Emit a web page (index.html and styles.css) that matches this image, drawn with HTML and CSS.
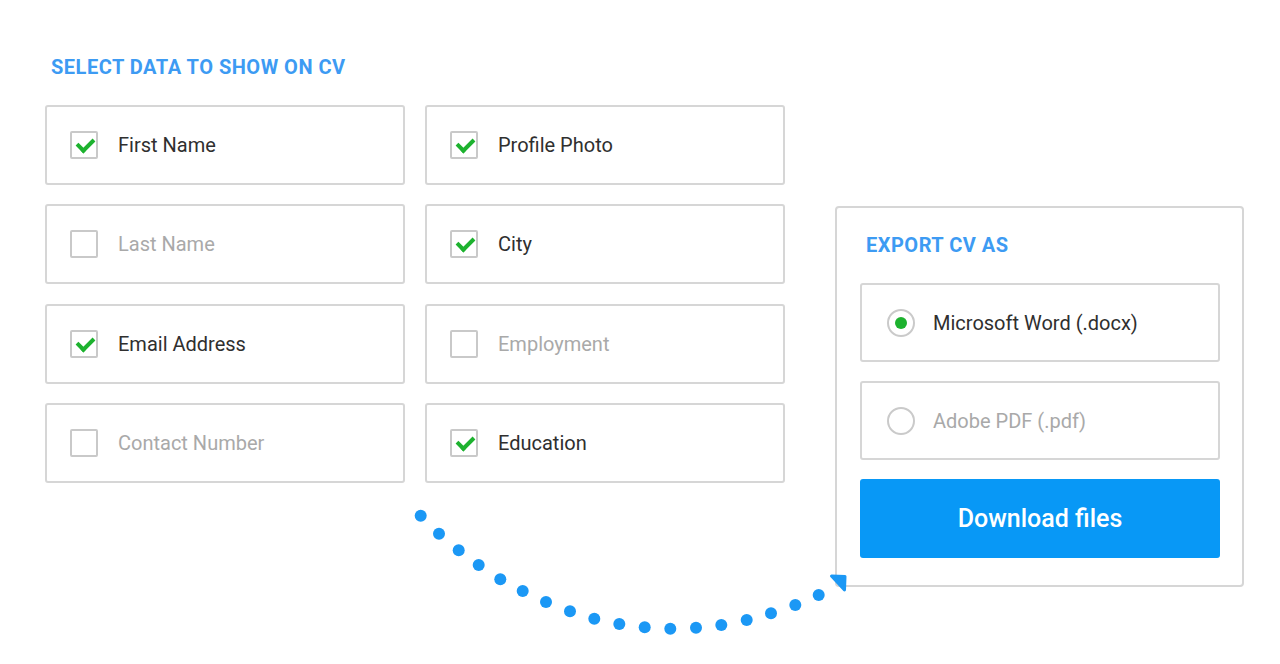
FILE: index.html
```html
<!DOCTYPE html>
<html lang="en">
<head>
    <meta charset="UTF-8">
    <meta name="viewport" content="width=device-width, initial-scale=1.0">
    <title>Export CV</title>
    <link rel="stylesheet" href="styles.css">
</head>
<body>
    <div class="page">
        <!-- data selection -->
        <section class="select-data">
            <h2 class="section-title">Select data to show on CV</h2>
            <div class="field-grid">
                <label class="field checked"><span class="checkbox"></span>First Name</label>
                <label class="field checked"><span class="checkbox"></span>Profile Photo</label>
                <label class="field"><span class="checkbox"></span>Last Name</label>
                <label class="field checked"><span class="checkbox"></span>City</label>
                <label class="field checked"><span class="checkbox"></span>Email Address</label>
                <label class="field"><span class="checkbox"></span>Employment</label>
                <label class="field"><span class="checkbox"></span>Contact Number</label>
                <label class="field checked"><span class="checkbox"></span>Education</label>
            </div>
        </section>

        <!-- export panel -->
        <section class="export-panel">
            <h2 class="section-title">Export CV as</h2>
            <label class="option selected"><span class="radio"></span>Microsoft Word (.docx)</label>
            <label class="option"><span class="radio"></span>Adobe PDF (.pdf)</label>
            <button class="download-btn">Download files</button>
        </section>

        <!-- dotted arrow -->
        <svg class="arrow" width="1280" height="664" viewBox="0 0 1280 664">
            <g fill="#1b98f5">
                <circle cx="420.7" cy="515.7" r="6"/>
                <circle cx="439" cy="533.7" r="6"/>
                <circle cx="458.7" cy="550.3" r="6"/>
                <circle cx="478.7" cy="565" r="6"/>
                <circle cx="500.3" cy="579.3" r="6"/>
                <circle cx="522.7" cy="591" r="6"/>
                <circle cx="546" cy="602" r="6"/>
                <circle cx="570" cy="611.3" r="6"/>
                <circle cx="594.3" cy="618.7" r="6"/>
                <circle cx="619.3" cy="624" r="6"/>
                <circle cx="644.7" cy="627.3" r="6"/>
                <circle cx="670.3" cy="628.7" r="6"/>
                <circle cx="696" cy="627.7" r="6"/>
                <circle cx="721.3" cy="625" r="6"/>
                <circle cx="746.7" cy="620" r="6"/>
                <circle cx="771" cy="613.3" r="6"/>
                <circle cx="795.3" cy="605" r="6"/>
                <circle cx="818.7" cy="595" r="6"/>
            </g>
            <polygon points="831.5,576 845,576.5 844.5,590" fill="#1b98f5" stroke="#1b98f5" stroke-width="3" stroke-linejoin="round"/>
        </svg>
    </div>
</body>
</html>
```

FILE: styles.css
```css
/* base */
* {
    box-sizing: border-box;
    margin: 0;
    padding: 0;
}

body {
    font-family: Roboto, "Liberation Sans", Arial, sans-serif;
    background: #fff;
    color: #333;
}

.page {
    position: relative;
    width: 1280px;
    height: 664px;
    display: flex;
    align-items: flex-start;
    gap: 50px;
    padding: 55px 0 0 45px;
}

/* headings */
.section-title {
    font-size: 20px;
    line-height: 24px;
    font-weight: 700;
    letter-spacing: 0.5px;
    text-transform: uppercase;
    color: #3d9bf3;
}

.select-data .section-title {
    padding-left: 6px;
    margin-bottom: 26px;
}

/* checkbox fields */
.field-grid {
    display: grid;
    grid-template-columns: 360px 360px;
    grid-auto-rows: 80px;
    gap: 19.4px 20px;
}

.field {
    display: flex;
    align-items: center;
    gap: 20px;
    padding-left: 23px;
    border: 2px solid #d6d6d6;
    border-radius: 3px;
    font-size: 20px;
    color: #a9a9a9;
}

.field.checked {
    color: #2f2f2f;
}

.checkbox {
    position: relative;
    width: 28px;
    height: 28px;
    border: 2px solid #c9c9c9;
    border-radius: 2px;
    flex-shrink: 0;
}

.field.checked .checkbox::after {
    content: "";
    position: absolute;
    left: 8px;
    top: 2px;
    width: 7px;
    height: 13px;
    border-right: 4px solid #1db22f;
    border-bottom: 4px solid #1db22f;
    transform: rotate(45deg);
}

/* export panel */
.export-panel {
    margin-top: 151px;
    width: 409px;
    display: flex;
    flex-direction: column;
    gap: 20px;
    padding: 25px 22px 27px 23px;
    border: 2px solid #d6d6d6;
    border-radius: 4px;
}

.export-panel .section-title {
    padding-left: 6px;
    margin-bottom: 6px;
}

.option {
    display: flex;
    align-items: center;
    gap: 18px;
    height: 79px;
    padding-left: 25px;
    border: 2px solid #d6d6d6;
    border-radius: 3px;
    font-size: 20px;
    color: #a9a9a9;
}

.option.selected {
    color: #2f2f2f;
}

.option + .option {
    margin-top: -1px;
}

.radio {
    position: relative;
    width: 28px;
    height: 28px;
    border: 2px solid #cacaca;
    border-radius: 50%;
    flex-shrink: 0;
}

.option.selected .radio::after {
    content: "";
    position: absolute;
    left: 6px;
    top: 6px;
    width: 12px;
    height: 12px;
    border-radius: 50%;
    background: #1db22f;
}

.download-btn {
    height: 79px;
    margin-top: -1px;
    border: none;
    border-radius: 3px;
    background: #0898f6;
    color: #fff;
    font-family: inherit;
    font-size: 25px;
    font-weight: 500;
    cursor: pointer;
}

/* arrow overlay */
.arrow {
    position: absolute;
    left: 0;
    top: 0;
    pointer-events: none;
}
```
